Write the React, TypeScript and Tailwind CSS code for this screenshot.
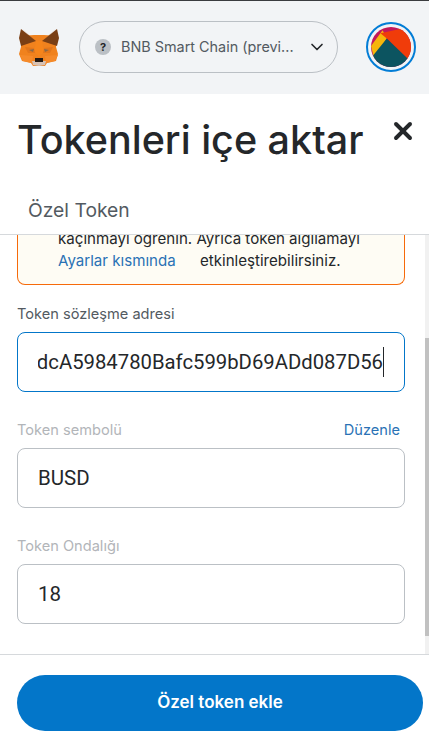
import React from 'react'
import { ChevronDown, X } from 'lucide-react'

function Fox() {
  return (
    <svg viewBox="0 0 42 38" className="w-[42px] h-[38px] shrink-0">
      <polygon points="3,8 16,7 26,7 39,8 38,19 40,26 38,33 29,35 27,38 15,38 13,35 4,33 1,26 3,19" fill="#f0821e" />
      <polygon points="3,1 18,13 3,18 1,10" fill="#7a3f14" />
      <polygon points="39,1 24,13 39,18 41,10" fill="#7a3f14" />
      <polygon points="3,0 18,13 12,8" fill="#c96a1c" />
      <polygon points="39,0 24,13 30,8" fill="#c96a1c" />
      <polygon points="18,13 24,13 26,24 21,28 16,24" fill="#f6851b" />
      <polygon points="7,19 16,20 17,25 10,25" fill="#e2761b" />
      <polygon points="35,19 26,20 25,25 32,25" fill="#e2761b" />
      <polygon points="11,22 16,21 15,24" fill="#8a6a4a" />
      <polygon points="31,22 26,21 27,24" fill="#8a6a4a" />
      <polygon points="2,27 15,28 14,35 5,33" fill="#f58a2a" />
      <polygon points="40,27 27,28 28,35 37,33" fill="#f58a2a" />
      <polygon points="14,33 28,33 27,37 21,38 15,37" fill="#d7c1b3" />
      <polygon points="17,30 25,30 25,34 17,34" fill="#241a14" />
    </svg>
  )
}

function Avatar() {
  return (
    <div className="w-[50px] h-[50px] rounded-full border-2 border-[#037dd6] p-[3px] shrink-0">
      <svg viewBox="0 0 38 38" className="w-full h-full rounded-full">
        <rect width="38" height="38" fill="#c2185b" />
        <polygon points="11,3 15,11 3,30 0,18" fill="#f6b60a" />
        <polygon points="9,6 22,3 38,0 38,31 36,32 15,11" fill="#f03c0a" />
        <polygon points="15,11 36,31 28,38 6,38 2,27" fill="#0c5460" />
      </svg>
    </div>
  )
}

function Field({ label, value, action }: { label: string; value: string; action?: string }) {
  return (
    <div className="mt-[28px]">
      <div className="flex justify-between items-center h-[20px] pr-[5px] mb-[8px]">
        <span className="text-[14.6px] leading-[20px] text-[#b2b5b9]">{label}</span>
        {action && <span className="text-[14.6px] leading-[20px] text-[#2a72b5]">{action}</span>}
      </div>
      <div className="h-[60px] border border-[#bbc0c5] rounded-[8px] flex items-center px-[20px] font-['Roboto',sans-serif] text-[20.5px] text-[#24272a]">
        {value}
      </div>
    </div>
  )
}

export default function App() {
  return (
    <div className="w-[429px] h-[744px] flex flex-col bg-white overflow-hidden font-['Inter',sans-serif] text-[#24272a]">
      <header className="h-[94px] shrink-0 bg-[#f2f4f6] border-t border-[#3a3c3f] flex items-center pl-[18px] pr-[13px] pb-[1px]">
        <Fox />
        <div className="ml-[19px] w-[259px] h-[52px] border border-[#bbc0c5] rounded-full flex items-center pl-[15px] pr-[10px]">
          <span className="w-[16px] h-[16px] rounded-full bg-[#bbc0c5] flex items-center justify-center text-[11px] font-bold text-[#24272a] shrink-0">?</span>
          <span className="ml-[10px] text-[14.4px] text-[#535a61] whitespace-nowrap flex-1">BNB Smart Chain (previ...</span>
          <ChevronDown size={20} strokeWidth={2} className="text-[#24272a] shrink-0" />
        </div>
        <div className="ml-auto">
          <Avatar />
        </div>
      </header>

      <div className="h-[141px] shrink-0 relative border-b border-[#d6d9dc]">
        <h1 className="pl-[17px] pt-[21px] text-[39.5px] leading-[50px] font-medium text-[#24272a] whitespace-nowrap">Tokenleri içe aktar</h1>
        <X size={28} strokeWidth={3.4} className="absolute right-[12px] top-[23px] text-[#24272a]" />
        <div className="pl-[28px] mt-[33px] text-[19.3px] leading-[24px] text-[#535a61]">Özel Token</div>
      </div>

      <div className="flex-1 min-h-0 flex">
        <main className="flex-1 min-w-0 pl-[17px] pr-[20px] overflow-hidden">
          <div className="h-[50px] border border-t-0 border-[#f66a0a] rounded-b-[8px] bg-[#fefcf4] pl-[40px] text-[15.1px] leading-[21px] relative overflow-hidden">
            {/* the first line sits half scrolled under the tab bar */}
            <div className="-mt-[7px] whitespace-nowrap">kaçınmayı öğrenin. Ayrıca token algılamayı</div>
            <div className="flex pt-[1px]">
              <span className="text-[#2a72b5] w-[142px] shrink-0">Ayarlar kısmında</span>
              <span className="whitespace-nowrap">etkinleştirebilirsiniz.</span>
            </div>
          </div>

          <div className="mt-[19px]">
            <div className="h-[20px] mb-[8px] flex items-center text-[14.6px] leading-[20px] text-[#535a61]">Token sözleşme adresi</div>
            <div className="h-[60px] border border-[#0376c9] rounded-[8px] flex items-center px-[20px]">
              <div className="flex-1 overflow-hidden flex justify-end whitespace-nowrap font-['Roboto',sans-serif] text-[20.3px] text-[#24272a]">
                <span className="border-r border-[#24272a] shrink-0">ddcA5984780Bafc599bD69ADd087D56</span>
              </div>
            </div>
          </div>

          <Field label="Token sembolü" value="BUSD" action="Düzenle" />
          <Field label="Token Ondalığı" value="18" />
        </main>
        <div className="w-[4px] shrink-0 bg-[#f1f1f1] pt-[103px] pb-[18px]">
          <div className="h-full bg-[#c1c1c1]" />
        </div>
      </div>

      <footer className="h-[90px] shrink-0 border-t border-[#d6d9dc] pl-[17px] pr-[6px] pt-[20px]">
        <button className="w-full h-[56px] rounded-full bg-[#0376c9] text-white text-[17px] font-semibold">Özel token ekle</button>
      </footer>
    </div>
  )
}
